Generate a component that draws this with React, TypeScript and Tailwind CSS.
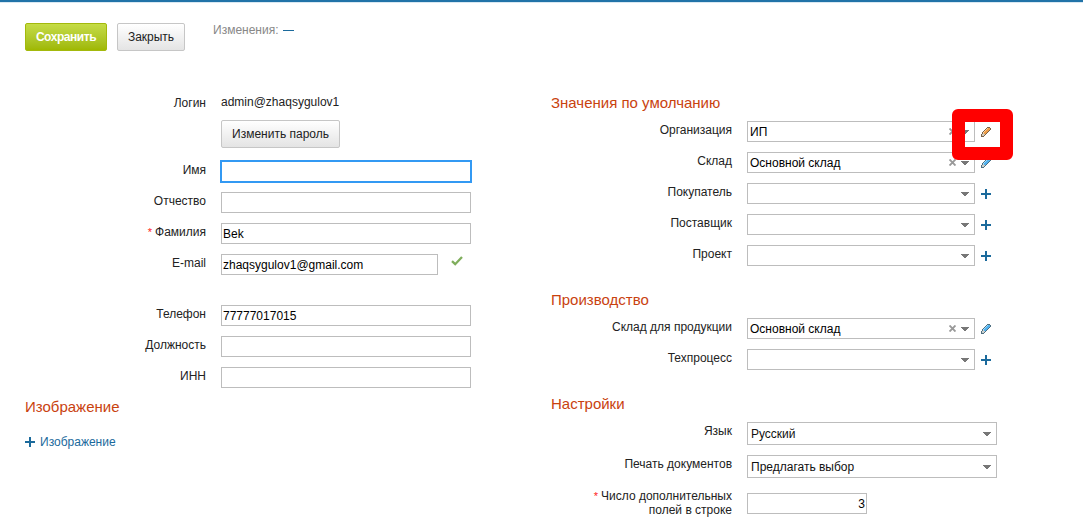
import type { ReactNode } from 'react';
import clsx from 'clsx';

const INPUT =
	'block h-[21px] rounded-none border border-[#bdbdbd] bg-white px-px py-0 text-xs text-black outline-none';

type RowProps = {
	label?: string;
	required?: boolean;
	className?: string;
	children: ReactNode;
};

const Row = ({ label, required, className, children }: RowProps) => (
	<div className={clsx('flex items-start', className)}>
		<label className="mr-[15px] w-[181px] shrink-0 pt-[2px] text-right leading-[14px] whitespace-pre-line text-[#222]">
			{required && <span className="mr-[3px] text-[11px] leading-3 text-[#f22]">*</span>}
			{label}
		</label>
		{children}
	</div>
);

const Heading = ({ children, className }: { children: ReactNode; className?: string }) => (
	<h2 className={clsx('text-[15px] leading-[18px] text-[#c9420f]', className)}>{children}</h2>
);

const PlusIcon = () => (
	<svg width="10" height="10" viewBox="0 0 10 10" shapeRendering="crispEdges" fill="#1b6a9c">
		<path d="M4 0h2v10H4zM0 4h10v2H0z" />
	</svg>
);

// D - outline, L - highlight, M - body, G - sharpened tip
const PENCIL = [
	'......DDD.',
	'.....DLMMD',
	'....DLMMMD',
	'...DLMMMD.',
	'..DLMMMD..',
	'.DLMMMD...',
	'.DGMMD....',
	'DGGGD.....',
	'DGGD......',
	'DDD.......',
];

const PENCIL_COLORS: Record<string, Record<string, string>> = {
	blue: { D: '#4f6f80', L: '#9bdcff', M: '#4fb0ee', G: '#c9d0cf' },
	orange: { D: '#7a6248', L: '#ffcf94', M: '#ee9c45', G: '#d3cbbb' },
};

const PencilIcon = ({ color = 'blue' }: { color?: 'blue' | 'orange' }) => (
	<svg width="10" height="10" viewBox="0 0 10 10" shapeRendering="crispEdges">
		{PENCIL.flatMap((line, y) =>
			line.split('').map((cell, x) =>
				cell === '.' ? null : (
					<rect key={`${x}-${y}`} x={x} y={y} width="1" height="1" fill={PENCIL_COLORS[color][cell]} />
				),
			),
		)}
	</svg>
);

const ArrowIcon = () => (
	<svg width="8" height="4" viewBox="0 0 8 4" shapeRendering="crispEdges" fill="#777">
		<path d="M0 0h8v1H0zM1 1h6v1H1zM2 2h4v1H2zM3 3h2v1H3z" />
	</svg>
);

const ClearIcon = () => (
	<svg width="7" height="7" viewBox="0 0 7 7" stroke="#999" strokeWidth="1.9">
		<path d="M.5.5l6 6M6.5.5l-6 6" />
	</svg>
);

type ComboProps = {
	label: string;
	value?: string;
	pencil?: 'blue' | 'orange';
	marked?: boolean;
	className?: string;
};

const Combo = ({ label, value, pencil, marked, className }: ComboProps) => (
	<Row label={label} className={className}>
		<div className="relative flex items-center">
			<div className="flex h-[21px] w-[228px] items-center border border-[#bdbdbd] pr-[5px] pl-[2px]">
				<input
					className="min-w-0 flex-1 text-xs text-black outline-none"
					defaultValue={value}
				/>
				{value && <ClearIcon />}
				<span className="ml-[5px]">
					<ArrowIcon />
				</span>
			</div>
			<span className="ml-[6px]">{pencil ? <PencilIcon color={pencil} /> : <PlusIcon />}</span>
			{marked && (
				<div className="absolute -top-3 left-[205px] z-10 h-[51px] w-[61px] rounded-[6px] border-[13px] border-[#f00]" />
			)}
		</div>
	</Row>
);

const Select = ({ label, value, className }: { label: string; value: string; className?: string }) => (
	<Row label={label} className={className}>
		<div className="flex h-[23px] w-[250px] items-center justify-between border border-[#bdbdbd] pr-[5px] pl-[3px] text-[#111]">
			{value}
			<ArrowIcon />
		</div>
	</Row>
);

const Toolbar = () => (
	<div className="flex items-start pt-5 pl-[25px]">
		<button className="h-7 w-[82px] rounded-[2px] border border-[#a3b90c] bg-linear-to-b from-[#c5dc45] to-[#9fb800] font-bold tracking-[-0.45px] text-white">
			Сохранить
		</button>
		<button className="ml-[10px] h-7 w-[68px] rounded-[2px] border border-[#c6c6c6] bg-linear-to-b from-white to-[#e4e4e4] text-[#222]">
			Закрыть
		</button>
		<div className="ml-7 flex items-center leading-[14px] text-[#888]">
			Изменения:
			<span className="mt-px ml-1 h-px w-[11px] bg-[#1b6a9c]" />
		</div>
	</div>
);

const ProfileForm = () => (
	<div className="w-[526px] shrink-0">
		<Row label="Логин" className="h-[26px]">
			<span className="pt-px leading-[14px] text-[#222]">admin@zhaqsygulov1</span>
		</Row>
		<Row className="mb-[13px]">
			<button className="h-7 w-[119px] rounded-[2px] border border-[#c6c6c6] bg-linear-to-b from-white to-[#e4e4e4] text-[#222]">
				Изменить пароль
			</button>
		</Row>
		<Row label="Имя" className="mb-[10px]">
			<input className={clsx(INPUT, 'w-[250px] outline-solid outline-1! outline-[#3399f3]! border-[#3399f3]!')} />
		</Row>
		<Row label="Отчество" className="mb-[10px]">
			<input className={clsx(INPUT, 'w-[250px]')} />
		</Row>
		<Row label="Фамилия" required className="mb-[10px]">
			<input className={clsx(INPUT, 'w-[250px]')} defaultValue="Bek" />
		</Row>
		<Row label="E-mail" className="mb-[30px]">
			<input className={clsx(INPUT, 'w-[217px]')} defaultValue="zhaqsygulov1@gmail.com" />
			<svg className="mt-[2px] ml-[13px]" width="12" height="10" viewBox="0 0 12 10" fill="none">
				<path d="M1 5.2 4.2 8.2 11 1" stroke="#7fae5c" strokeWidth="2.3" />
			</svg>
		</Row>
		<Row label="Телефон" className="mb-[10px]">
			<input className={clsx(INPUT, 'w-[250px]')} defaultValue="77777017015" />
		</Row>
		<Row label="Должность" className="mb-[10px]">
			<input className={clsx(INPUT, 'w-[250px]')} />
		</Row>
		<Row label="ИНН" className="mb-[10px]">
			<input className={clsx(INPUT, 'w-[250px]')} />
		</Row>
		<Heading>Изображение</Heading>
		<a className="mt-[19px] flex items-center gap-[5px] leading-[14px] text-[#1b6a9c]">
			<PlusIcon />
			Изображение
		</a>
	</div>
);

const SettingsForm = () => (
	<div className="w-[450px]">
		<Heading className="mb-[9px]">Значения по умолчанию</Heading>
		<Combo label="Организация" value="ИП" pencil="orange" marked className="mb-[10px]" />
		<Combo label="Склад" value="Основной склад" pencil="blue" className="mb-[10px]" />
		<Combo label="Покупатель" className="mb-[10px]" />
		<Combo label="Поставщик" className="mb-[10px]" />
		<Combo label="Проект" />
		<Heading className="mt-[25px] mb-[9px]">Производство</Heading>
		<Combo label="Склад для продукции" value="Основной склад" pencil="blue" className="mb-[10px]" />
		<Combo label="Техпроцесс" />
		<Heading className="mt-[25px] mb-[9px]">Настройки</Heading>
		<Select label="Язык" value="Русский" className="mb-[10px]" />
		<Select label="Печать документов" value="Предлагать выбор" className="mb-[9px]" />
		<Row label={'Число дополнительных\nполей в строке'} required>
			<input className={clsx(INPUT, 'mt-[6px] w-[120px] text-right')} defaultValue="3" />
		</Row>
	</div>
);

export default function App() {
	return (
		<div className="h-[527px] w-[1083px] overflow-hidden bg-white font-['Liberation_Sans',Arial,sans-serif] text-xs">
			<div className="h-[3px] border-b border-[#d9e8f2] bg-[#2173a8]" />
			<Toolbar />
			<div className="mt-[43px] flex pl-[25px]">
				<ProfileForm />
				<SettingsForm />
			</div>
		</div>
	);
}
